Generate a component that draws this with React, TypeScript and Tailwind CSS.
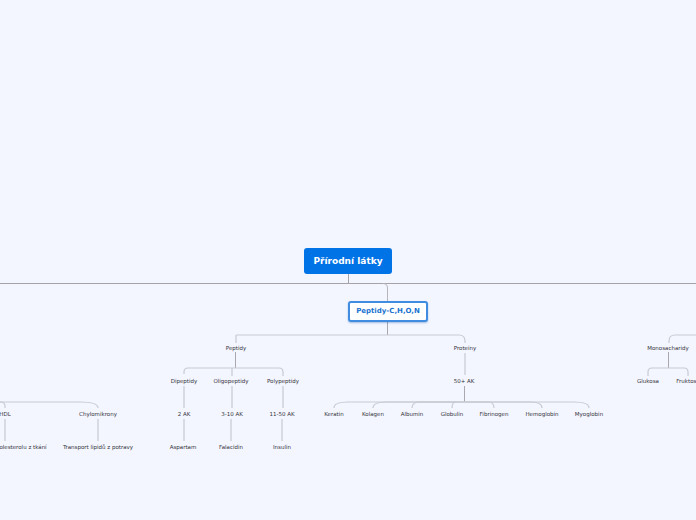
const labels = [
  { text: 'Peptidy', cls: 'left-[236px] top-[348px]' },
  { text: 'Proteiny', cls: 'left-[465px] top-[348px]' },
  { text: 'Monosacharidy', cls: 'left-[668px] top-[348px]' },
  { text: 'Dipeptidy', cls: 'left-[184px] top-[381px]' },
  { text: 'Oligopeptidy', cls: 'left-[231px] top-[381px]' },
  { text: 'Polypeptidy', cls: 'left-[283px] top-[381px]' },
  { text: '50+ AK', cls: 'left-[464px] top-[381px]' },
  { text: 'Glukosa', cls: 'left-[648px] top-[381px]' },
  { text: 'Fruktosa', cls: 'left-[688px] top-[381px]' },
  { text: 'HDL', cls: 'left-[5px] top-[414px]' },
  { text: 'Chylomikrony', cls: 'left-[98px] top-[414px]' },
  { text: '2 AK', cls: 'left-[184px] top-[414px]' },
  { text: '3-10 AK', cls: 'left-[232px] top-[414px]' },
  { text: '11-50 AK', cls: 'left-[282px] top-[414px]' },
  { text: 'Keratin', cls: 'left-[334px] top-[414px]' },
  { text: 'Kolagen', cls: 'left-[373px] top-[414px]' },
  { text: 'Albumin', cls: 'left-[412px] top-[414px]' },
  { text: 'Globulin', cls: 'left-[452px] top-[414px]' },
  { text: 'Fibrinogen', cls: 'left-[494px] top-[414px]' },
  { text: 'Hemoglobin', cls: 'left-[542px] top-[414px]' },
  { text: 'Myoglobin', cls: 'left-[589px] top-[414px]' },
  { text: 'Transport cholesterolu z tkání', cls: 'left-[6px] top-[447px]' },
  { text: 'Transport lipidů z potravy', cls: 'left-[98px] top-[447px]' },
  { text: 'Aspartam', cls: 'left-[183px] top-[447px]' },
  { text: 'Falacidin', cls: 'left-[231px] top-[447px]' },
  { text: 'Insulin', cls: 'left-[282px] top-[447px]' },
];

const lightLines = [
  'M236 335H459Q465 335 465 341V343',
  'M669 343V341Q669 335 675 335H696',
  'M236 335V343',
  'M465 353V375',
  'M184 374V372Q184 368 188 368H279Q283 368 283 372V376',
  'M232 368V376',
  'M184 386V408',
  'M232 386V408',
  'M283 386V408',
  'M184 419V441',
  'M231 419V441',
  'M282 419V441',
  'M5 419V441',
  'M98 419V441',
  'M5 408V406Q5 402 0 402',
  'M0 402H80Q98 402 98 408',
  'M334 408Q334 402 348 402H574Q589 402 589 408',
  'M373 408Q373 402 387 402H530Q542 402 542 408',
  'M412 408Q412 402 420 402H488Q494 402 494 408',
  'M452 408Q452 402 456 402',
  'M648 376V372Q648 368 652 368H684Q688 368 688 372V376',
];

export default function App() {
  return (
    <div className="relative w-[696px] h-[520px] overflow-hidden bg-[#f3f6ff] font-['DejaVu_Sans',sans-serif]">
      <svg className="absolute inset-0" width="696" height="520" fill="none">
        <path d="M0 283.5H696" stroke="#a3a3a8" />
        <path d="M348.5 274V283" stroke="#a3a3a8" />
        <path d="M383 283.5Q387.5 283.5 387.5 288V301" stroke="#b5b5ba" />
        <path d="M387.5 322V335" stroke="#a8a8ae" />
        <path d="M235.5 352V368" stroke="#a8a8ae" />
        <path d="M464.5 386V402" stroke="#a8a8ae" />
        <path d="M668.5 352V368" stroke="#a8a8ae" />
        {lightLines.map((d) => (
          <path key={d} d={d} stroke="#c8cad2" strokeWidth="1.2" />
        ))}
      </svg>

      <div className="absolute left-[304px] top-[248px] w-[88px] h-[26px] pt-[2px] flex items-center justify-center rounded-[3px] bg-[#0073e6] text-white text-[9px] font-bold">
        Přírodní látky
      </div>
      <div className="absolute left-[348px] top-[301px] w-[80px] h-[21px] flex items-center justify-center rounded-[3px] bg-white border-2 border-[#3f8ce0] shadow-[0_1px_2px_rgba(0,80,170,0.35)] text-[#1a73d0] text-[7px] font-bold">
        Peptidy-C,H,O,N
      </div>

      {labels.map((l) => (
        <div
          key={l.text}
          className={`absolute ${l.cls} mt-px -translate-x-1/2 -translate-y-1/2 whitespace-nowrap text-[5.5px] leading-none text-[#33333a]`}
        >
          {l.text}
        </div>
      ))}
    </div>
  );
}
